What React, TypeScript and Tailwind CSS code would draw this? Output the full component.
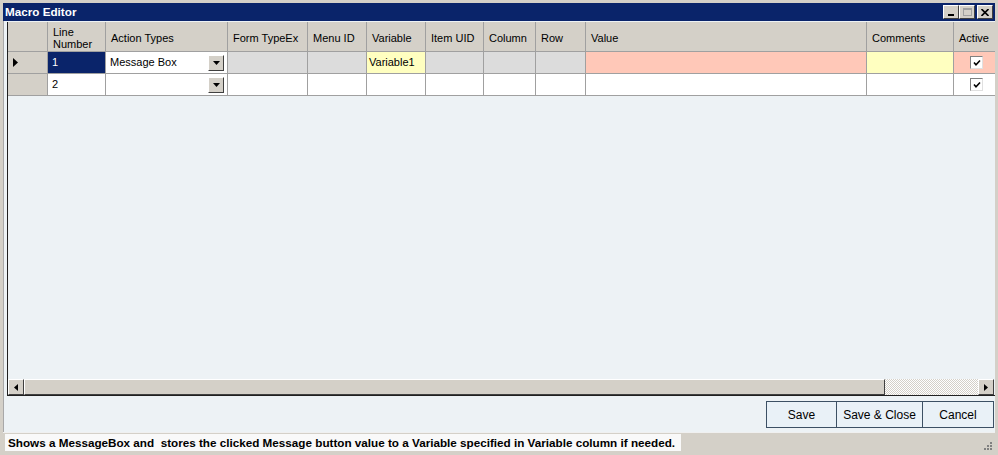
import React from 'react'

const COLS = [
  { key: 'line', title: 'Line Number', w: 'w-[58px]' },
  { key: 'action', title: 'Action Types', w: 'w-[122px]' },
  { key: 'form', title: 'Form TypeEx', w: 'w-[80px]' },
  { key: 'menu', title: 'Menu ID', w: 'w-[59px]' },
  { key: 'variable', title: 'Variable', w: 'w-[59px]' },
  { key: 'item', title: 'Item UID', w: 'w-[58px]' },
  { key: 'column', title: 'Column', w: 'w-[52px]' },
  { key: 'row', title: 'Row', w: 'w-[50px]' },
  { key: 'value', title: 'Value', w: 'w-[281px]' },
  { key: 'comments', title: 'Comments', w: 'w-[87px]' },
  { key: 'active', title: 'Active', w: 'w-[60px]' },
]

function DropButton() {
  return (
    <div className="w-[16px] h-[16px] bg-[#d4d0c8] border border-t-white border-l-white border-r-[#404040] border-b-[#404040] flex items-center justify-center shrink-0">
      <svg width="7" height="4" viewBox="0 0 7 4">
        <polygon points="0,0 7,0 3.5,4" fill="#000" />
      </svg>
    </div>
  )
}

function CheckBox() {
  return (
    <div className="w-[13px] h-[13px] bg-white border border-t-[#808080] border-l-[#808080] border-r-[#e0e0e0] border-b-[#e0e0e0] flex items-center justify-center">
      <svg width="8" height="8" viewBox="0 0 8 8">
        <path d="M1 3.5 L3 5.8 L7 1.5" fill="none" stroke="#000" strokeWidth="1.6" />
      </svg>
    </div>
  )
}

function Cell({ w, bg, children, className = '' }: { w: string; bg: string; children?: React.ReactNode; className?: string }) {
  return (
    <div className={`${w} ${bg} h-full border-r border-[#a0a0a0] flex items-center shrink-0 ${className}`}>
      {children}
    </div>
  )
}

function ArrowButton({ dir }: { dir: 'left' | 'right' }) {
  return (
    <div className="w-[16px] h-[16px] bg-[#d4d0c8] border border-t-white border-l-white border-r-[#404040] border-b-[#404040] flex items-center justify-center shrink-0">
      <svg width="4" height="7" viewBox="0 0 4 7">
        {dir === 'left' ? <polygon points="4,0 4,7 0,3.5" fill="#000" /> : <polygon points="0,0 0,7 4,3.5" fill="#000" />}
      </svg>
    </div>
  )
}

function TitleButton({ children }: { children: React.ReactNode }) {
  return (
    <div className="w-[16px] h-[14px] bg-[#d4d0c8] border border-t-white border-l-white border-r-[#404040] border-b-[#404040] flex items-center justify-center">
      {children}
    </div>
  )
}

export default function App() {
  return (
    <div
      className="w-[998px] h-[455px] bg-[#d4d0c8] p-[3px] flex flex-col text-[11px] text-black overflow-hidden"
      style={{ fontFamily: '"Liberation Sans", Arial, sans-serif' }}
    >
      {/* title bar */}
      <div className="h-[18px] bg-[#0a246a] flex items-center justify-between pl-[2px] pr-[2px] shrink-0">
        <span className="text-white font-bold text-[11.7px]">Macro Editor</span>
        <div className="flex items-center">
          <TitleButton>
            <div className="w-[6px] h-[2px] bg-black mt-[6px]" />
          </TitleButton>
          <TitleButton>
            <div className="w-[9px] h-[8px] border border-t-2 border-[#a0a0a0]" />
          </TitleButton>
          <div className="w-[2px]" />
          <TitleButton>
            <svg width="8" height="7" viewBox="0 0 8 7">
              <path d="M0.5 0 L7.5 7 M7.5 0 L0.5 7" stroke="#000" strokeWidth="1.6" />
            </svg>
          </TitleButton>
        </div>
      </div>

      {/* client */}
      <div className="flex-1 bg-[#edf2f5] flex flex-col pt-[1px] border-l border-[#a8a8a8]">
        {/* grid */}
        <div className="ml-[3px] h-[374px] border-l border-b border-[#202020] flex flex-col overflow-hidden">
          <div className="flex-1 overflow-hidden">
            {/* header */}
            <div className="flex h-[30px] border-b border-[#a0a0a0] bg-[#d4d0c8]">
              <div className="w-[40px] h-full border-r border-[#a0a0a0] shrink-0" />
              {COLS.map((c) => (
                <Cell key={c.key} w={c.w} bg="bg-[#d4d0c8]" className="pl-[5px] pt-[3px] leading-[12px]">
                  {c.key === 'line' ? (
                    <span>
                      Line
                      <br />
                      Number
                    </span>
                  ) : (
                    c.title
                  )}
                </Cell>
              ))}
            </div>
            {/* row 1 */}
            <div className="flex h-[22px] border-b border-[#a0a0a0]">
              <div className="w-[40px] h-full bg-[#d4d0c8] border-r border-[#a0a0a0] flex items-center pl-[5px] shrink-0">
                <svg width="5" height="9" viewBox="0 0 5 9">
                  <polygon points="0,0 5,4.5 0,9" fill="#000" />
                </svg>
              </div>
              <Cell w="w-[58px]" bg="bg-[#0a246a]" className="pl-[4px] text-white">1</Cell>
              <Cell w="w-[122px]" bg="bg-white" className="pl-[4px] pr-[3px] justify-between">
                <span>Message Box</span>
                <DropButton />
              </Cell>
              <Cell w="w-[80px]" bg="bg-[#dcdcdc]" />
              <Cell w="w-[59px]" bg="bg-[#dcdcdc]" />
              <Cell w="w-[59px]" bg="bg-[#ffffc0]" className="pl-[2px]">Variable1</Cell>
              <Cell w="w-[58px]" bg="bg-[#dcdcdc]" />
              <Cell w="w-[52px]" bg="bg-[#dcdcdc]" />
              <Cell w="w-[50px]" bg="bg-[#dcdcdc]" />
              <Cell w="w-[281px]" bg="bg-[#ffc8b8]" />
              <Cell w="w-[87px]" bg="bg-[#ffffc0]" />
              <Cell w="w-[60px]" bg="bg-[#ffc8b8]" className="pl-[16px]">
                <CheckBox />
              </Cell>
            </div>
            {/* row 2 */}
            <div className="flex h-[22px] border-b border-[#a0a0a0]">
              <div className="w-[40px] h-full bg-[#d4d0c8] border-r border-[#a0a0a0] shrink-0" />
              <Cell w="w-[58px]" bg="bg-white" className="pl-[4px]">2</Cell>
              <Cell w="w-[122px]" bg="bg-white" className="pr-[3px] justify-end">
                <DropButton />
              </Cell>
              <Cell w="w-[80px]" bg="bg-white" />
              <Cell w="w-[59px]" bg="bg-white" />
              <Cell w="w-[59px]" bg="bg-white" />
              <Cell w="w-[58px]" bg="bg-white" />
              <Cell w="w-[52px]" bg="bg-white" />
              <Cell w="w-[50px]" bg="bg-white" />
              <Cell w="w-[281px]" bg="bg-white" />
              <Cell w="w-[87px]" bg="bg-white" />
              <Cell w="w-[60px]" bg="bg-white" className="pl-[16px]">
                <CheckBox />
              </Cell>
            </div>
          </div>
          {/* horizontal scrollbar */}
          <div className="h-[16px] flex shrink-0 mr-[1px]">
            <ArrowButton dir="left" />
            <div className="w-[861px] h-full bg-[#d4d0c8] border border-t-white border-l-white border-r-[#404040] border-b-[#404040] shrink-0" />
            <div className="flex-1 h-full bg-[repeating-conic-gradient(#ffffff_0%_25%,#d4d0c8_0%_50%)] bg-[length:2px_2px]" />
            <ArrowButton dir="right" />
          </div>
        </div>

        {/* buttons */}
        <div className="flex justify-end pt-[5px] pr-[1px]">
          <div className="flex h-[27px] border border-[#3c5064] bg-[#e9f1f7]">
            <button className="w-[70px] h-full border-r border-[#3c5064] text-[12px]">Save</button>
            <button className="w-[86px] h-full border-r border-[#3c5064] text-[12px]">Save &amp; Close</button>
            <button className="w-[70px] h-full text-[12px]">Cancel</button>
          </div>
        </div>
      </div>

      {/* status bar */}
      <div className="h-[20px] bg-[#d4d0c8] flex items-center justify-between pl-[2px] pr-[2px] shrink-0 border-t border-[#f0f0f0]">
        <div className="h-[17px] bg-[#f9f9f9] flex items-center pl-[3px] pr-[6px] font-bold text-[11.7px]">
          Shows a MessageBox and&nbsp; stores the clicked Message button value to a Variable specified in Variable column if needed.
        </div>
        <svg width="11" height="11" viewBox="0 0 11 11" className="self-end mb-[1px]">
          <g fill="#808080">
            <rect x="8" y="2" width="2" height="2" />
            <rect x="5" y="5" width="2" height="2" />
            <rect x="8" y="5" width="2" height="2" />
            <rect x="2" y="8" width="2" height="2" />
            <rect x="5" y="8" width="2" height="2" />
            <rect x="8" y="8" width="2" height="2" />
          </g>
        </svg>
      </div>
    </div>
  )
}
